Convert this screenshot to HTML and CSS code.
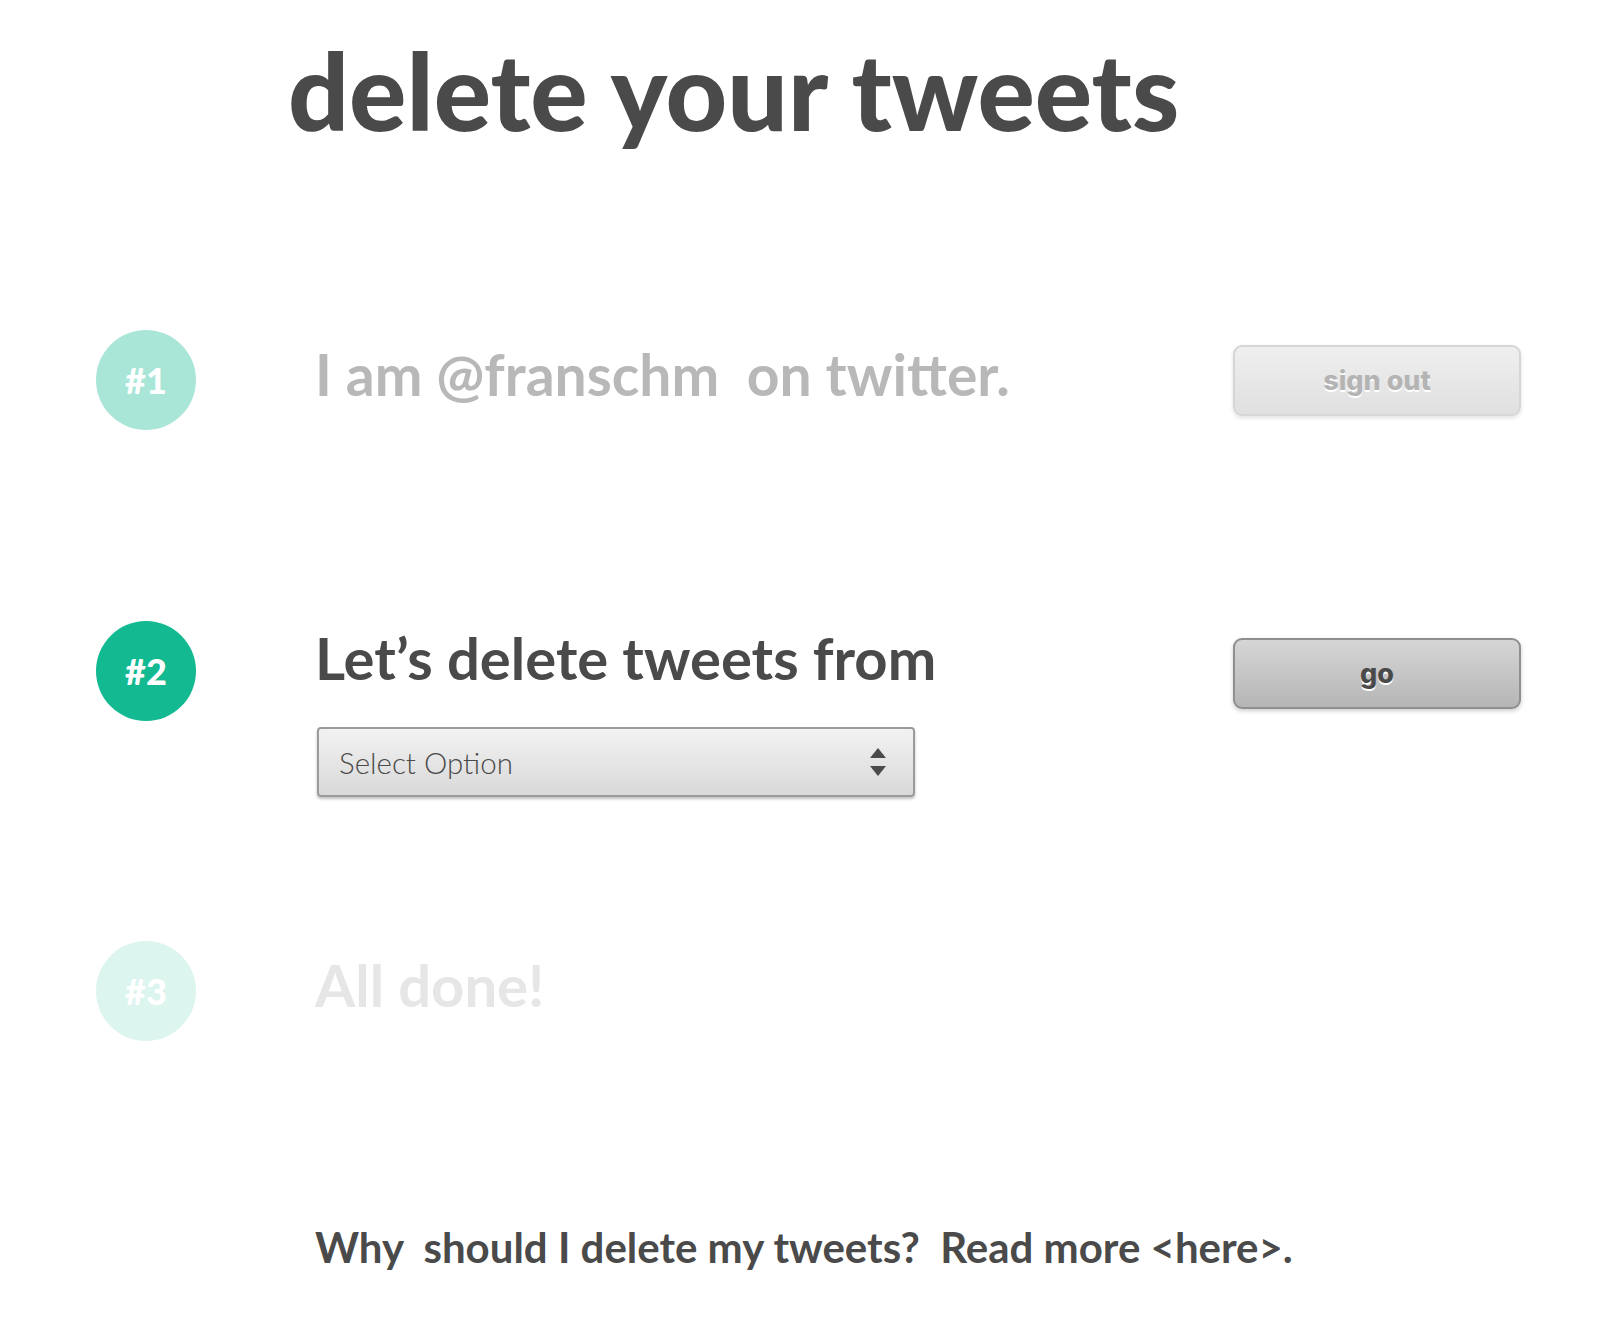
FILE: index.html
```html
<!DOCTYPE html>
<html lang="en">
<head>
<meta charset="utf-8">
<title>delete your tweets</title>
<link rel="stylesheet" href="styles.css">
</head>
<body>
<main class="page">
  <h1 class="title">delete your tweets</h1>

  <section class="steps">
    <div class="step step-done">
      <div class="badge badge-1">#1</div>
      <div class="step-body">
        <p class="step-text">I am @franschm&nbsp; on twitter.</p>
      </div>
      <button class="btn btn-light" type="button">sign out</button>
    </div>

    <div class="step step-active">
      <div class="badge badge-2">#2</div>
      <div class="step-body">
        <p class="step-text">Let’s delete tweets from</p>
        <div class="select">
          <span class="select-label">Select Option</span>
          <span class="select-arrows">
            <svg width="18" height="34" viewBox="0 0 18 34">
              <path d="M9 3 L17 13 L1 13 Z" fill="#4a4a4a"/>
              <path d="M1 21 L17 21 L9 31 Z" fill="#4a4a4a"/>
            </svg>
          </span>
        </div>
      </div>
      <button class="btn btn-dark" type="button">go</button>
    </div>

    <div class="step step-todo">
      <div class="badge badge-3">#3</div>
      <div class="step-body">
        <p class="step-text">All done!</p>
      </div>
      <div></div>
    </div>
  </section>

  <p class="footer">Why&nbsp; should I delete my tweets?&nbsp; Read more &lt;here&gt;.</p>
</main>
</body>
</html>
```

FILE: styles.css
```css
html, body {
  margin: 0;
  padding: 0;
  background: #ffffff;
}

body {
  font-family: "Lato", "Noto Sans", sans-serif;
  color: #4a4a4a;
}

.page {
  padding: 0 83px 0 96px;
}

.title {
  margin: 0 0 0 192px;
  padding-top: 25px;
  font-size: 107px;
  line-height: 130px;
  font-weight: 900;
  color: #4a4a4a;
}

.steps {
  margin-top: 175px;
  display: flex;
  flex-direction: column;
}

.step {
  display: grid;
  grid-template-columns: 100px 1fr 288px;
  column-gap: 121px;
  align-items: start;
}

.step-active { margin-top: 191px; }
.step-todo { margin-top: 144px; }

.badge {
  width: 100px;
  height: 100px;
  border-radius: 50%;
  display: flex;
  align-items: center;
  justify-content: center;
  color: #ffffff;
  font-family: "Lato", sans-serif;
  font-weight: 900;
  font-size: 36px;
}

.badge-1 { background: #a9e6d8; }
.badge-2 { background: #12b991; }
.badge-3 { background: #dcf5ef; }

.step-body {
  display: flex;
  flex-direction: column;
  margin-left: -2px;
}

.step-text {
  margin: 0;
  font-size: 58px;
  line-height: 88px;
  font-weight: 700;
  white-space: nowrap;
}

.step-done .step-text { color: #b8b8b8; font-size: 57px; }
.step-active .step-text { color: #4a4a4a; margin-top: -7px; }
.step-todo .step-text { color: #e6e6e6; }

.select {
  margin: 25px 0 0 2px;
  width: 598px;
  height: 70px;
  box-sizing: border-box;
  border: 2px solid #9b9b9b;
  border-radius: 4px;
  background: linear-gradient(#f2f2f2, #d9d9d9);
  box-shadow: 0 2px 3px rgba(0,0,0,0.25);
  display: flex;
  align-items: center;
  justify-content: space-between;
  padding: 0 26px 0 20px;
}

.select-label {
  font-size: 29.5px;
  font-weight: 300;
  color: #4a4a4a;
}

.select-arrows {
  display: flex;
}

.btn {
  width: 288px;
  height: 71px;
  border-radius: 9px;
  font-family: "Inter", "Lato", sans-serif;
  font-weight: 800;
  font-size: 27px;
  cursor: pointer;
  padding: 0;
}

.btn-light {
  margin-top: 15px;
  border: 2px solid #d6d6d6;
  background: linear-gradient(#efefef, #e0e0e0);
  color: #b4b4b4;
  text-shadow: 0 2px 0 #ffffff;
  box-shadow: 0 2px 4px rgba(0,0,0,0.12);
}

.btn-dark {
  margin-top: 17px;
  border: 2px solid #8f8f8f;
  background: linear-gradient(#d6d6d6, #b5b5b5);
  color: #4a4a4a;
  text-shadow: 0 2px 0 #ffffff;
  box-shadow: 0 2px 4px rgba(0,0,0,0.2);
}

.footer {
  margin: 181px 0 0 219px;
  font-size: 42px;
  line-height: 50px;
  font-weight: 700;
  color: #4a4a4a;
  white-space: nowrap;
}
```
